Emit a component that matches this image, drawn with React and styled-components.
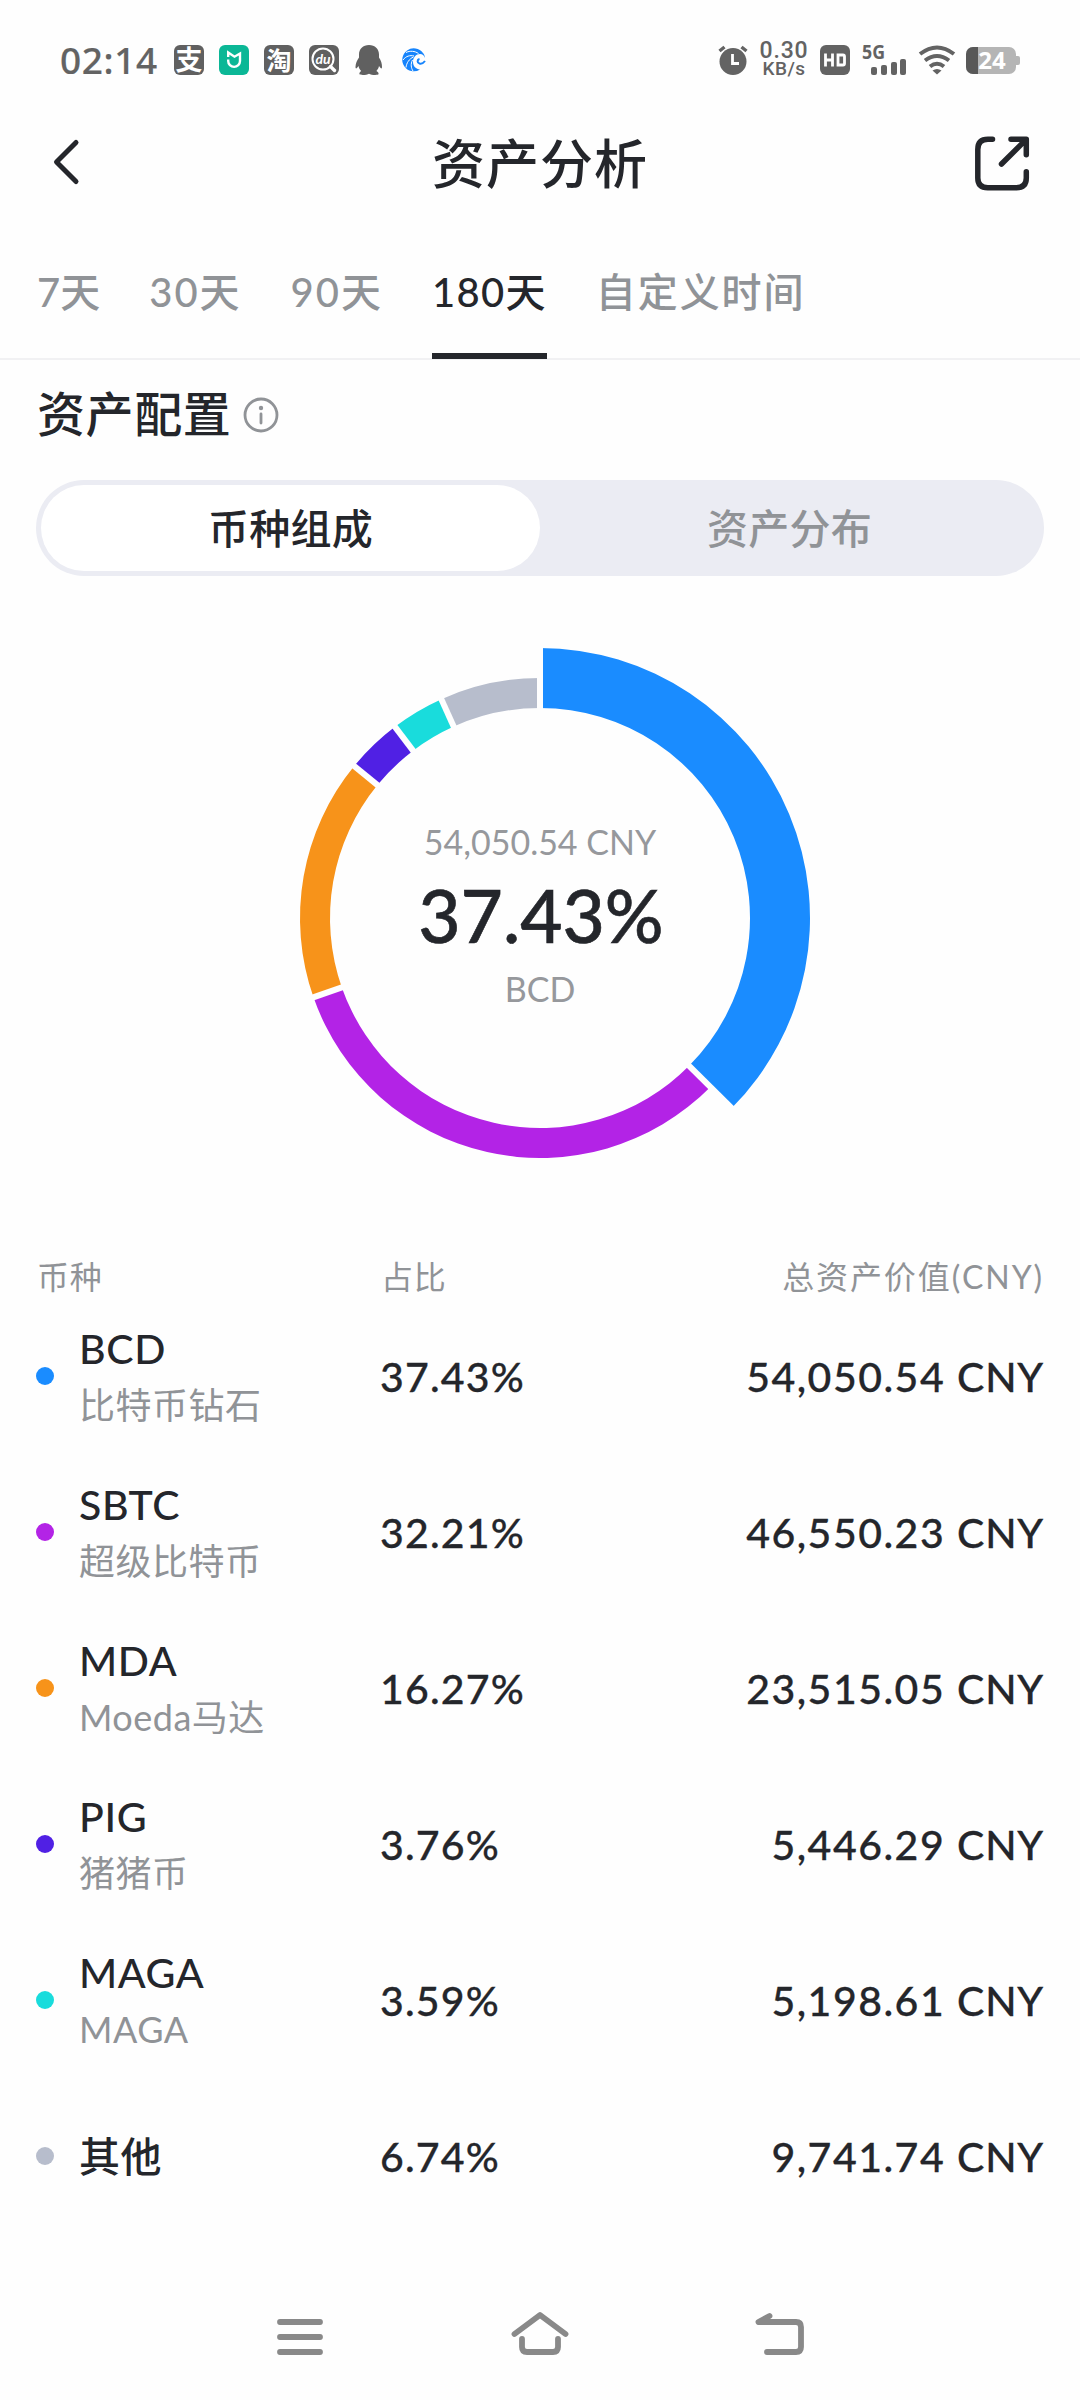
import React from "react";
import styled, { createGlobalStyle } from "styled-components";

const GlobalStyle = createGlobalStyle`
  * {
    box-sizing: border-box;
  }

  body {
    margin: 0;
    background: #fefefe;
    font-family: Lato, "Noto Sans CJK SC", sans-serif;
    color: #24262b;
  }
`;

const Screen = styled.div`
  display: flex;
  flex-direction: column;
  width: 1080px;
  height: 2400px;
  background: #fefefe;
  overflow: hidden;
`;

const StatusBar = styled.header`
  display: flex;
  justify-content: space-between;
  align-items: center;
  height: 120px;
  padding: 0 60px;
  color: #636363;
`;

const StatusGroup = styled.div`
  display: flex;
  align-items: center;
  gap: ${props => props.$gap || 0}px;

  svg {
    flex-shrink: 0;
    overflow: visible;
  }
`;

const Clock = styled.span`
  width: 100px;
  font-family: "Noto Sans", sans-serif;
  font-size: 37px;
  font-weight: 500;
  letter-spacing: 0.6px;
  line-height: 40px;
  -webkit-text-stroke: 0.2px;
`;

const AppIcons = styled.div`
  display: flex;
  align-items: center;
  gap: 15px;
`;

const AppTile = styled.div`
  display: flex;
  justify-content: center;
  align-items: center;
  width: 30px;
  height: 30px;
  border-radius: 6px;
  background: ${props => props.$color || "#606060"};
  color: #fff;
  font-size: ${props => props.$size || 27}px;
  font-weight: 700;
  line-height: 28px;
`;

const Speed = styled.div`
  display: flex;
  flex-direction: column;
  align-items: center;
  width: 48px;
  font-family: Roboto, sans-serif;
  font-size: 23px;
  font-weight: 500;
  letter-spacing: 0.8px;
  line-height: 18px;
`;

const SpeedUnit = styled.span`
  font-size: 19px;
  letter-spacing: 0.4px;
`;

const Header = styled.div`
  display: flex;
  justify-content: space-between;
  align-items: center;
  height: 88px;
  padding: 0 50px 0 48px;
`;

const Title = styled.h1`
  margin: 0;
  padding: 0 0 7px 2px;
  font-size: 53px;
  font-weight: 500;
  letter-spacing: 1px;
`;

const Tabs = styled.nav`
  display: flex;
  gap: 49px;
  height: 152px;
  padding: 48px 37px 0;
  border-bottom: 2px solid #f1f1f3;
`;

const Tab = styled.div`
  height: 103px;
  padding-top: 8px;
  font-size: 40px;
  font-weight: 500;
  letter-spacing: ${props => props.$spacing}px;
  line-height: 56px;
  white-space: nowrap;
  color: ${props => (props.$active ? "#24262b" : "#909397")};
  border-bottom: 6px solid ${props => (props.$active ? "#24262b" : "transparent")};
`;

const Section = styled.section`
  padding: 23px 36px 0;
`;

const SectionHead = styled.div`
  display: flex;
  align-items: center;
  gap: 12px;
  height: 64px;
  margin: 0 0 33px 1px;
`;

const SectionTitle = styled.h2`
  margin: 0;
  padding-bottom: 8px;
  font-size: 48px;
  font-weight: 500;
  letter-spacing: 0.6px;
`;

const Switch = styled.div`
  display: flex;
  height: 96px;
  padding: 5px;
  border-radius: 48px;
  background: #ebecf3;
`;

const SwitchItem = styled.div`
  display: flex;
  flex: 1;
  justify-content: center;
  align-items: center;
  padding-bottom: 4px;
  border-radius: 43px;
  background: ${props => (props.$active ? "#fff" : "transparent")};
  color: ${props => (props.$active ? "#24262b" : "#909397")};
  font-size: 41px;
  font-weight: 500;
  letter-spacing: 0.3px;
`;

const ChartArea = styled.div`
  display: grid;
  justify-items: center;
  align-items: center;
  height: 560px;
  margin-top: 62px;

  > * {
    grid-area: 1 / 1;
  }
`;

const ChartLabel = styled.div`
  display: flex;
  flex-direction: column;
  align-items: center;
  padding-bottom: 6px;
  color: #96989c;
  font-size: 34px;
  line-height: 46px;
`;

const ChartPercent = styled.div`
  padding-left: 2px;
  color: #24262b;
  font-size: 73px;
  font-weight: 500;
  line-height: 101px;
  -webkit-text-stroke: 0.6px;
`;

const Table = styled.div`
  padding: 0 36px;
  margin-top: 54px;
`;

const Row = styled.div`
  display: grid;
  grid-template-columns: 344px 250px 1fr;
  align-items: center;
  height: 156px;
`;

const HeadRow = styled(Row)`
  height: 46px;
  color: #909397;
  font-size: 32px;
`;

const HeadCell = styled.span`
  padding-left: ${props => (props.$right ? 0 : 1)}px;
  letter-spacing: ${props => (props.$right ? 1.9 : 0.8)}px;
  text-align: ${props => (props.$right ? "right" : "left")};
`;

const Coin = styled.div`
  display: flex;
  align-items: center;
`;

const Dot = styled.span`
  width: 18px;
  height: 18px;
  margin-right: 25px;
  border-radius: 50%;
  background: ${props => props.$color};
`;

const CoinText = styled.div`
  padding-top: 2px;
`;

const CoinName = styled.div`
  font-size: 41px;
  font-weight: 500;
  letter-spacing: 0.6px;
  line-height: 56px;
`;

const CoinAlias = styled.div`
  color: #909397;
  font-size: 36px;
  letter-spacing: 0.5px;
  line-height: 56px;
`;

const Amount = styled.div`
  font-size: 41px;
  font-weight: 500;
  letter-spacing: ${props => (props.$right ? 1.5 : 1.2)}px;
  text-align: ${props => (props.$right ? "right" : "left")};
  -webkit-text-stroke: 0.3px;
`;

const Currency = styled.span`
  letter-spacing: 0.8px;
`;

const NavBar = styled.footer`
  display: flex;
  justify-content: space-between;
  align-items: center;
  height: 128px;
  margin-top: auto;
  padding: 0 269px;
`;

const coins = [
  { name: "BCD", alias: "比特币钻石", percent: 37.43, value: "54,050.54", color: "#1a8cff" },
  { name: "SBTC", alias: "超级比特币", percent: 32.21, value: "46,550.23", color: "#b323e6" },
  { name: "MDA", alias: "Moeda马达", percent: 16.27, value: "23,515.05", color: "#f7931a" },
  { name: "PIG", alias: "猪猪币", percent: 3.76, value: "5,446.29", color: "#5020e4" },
  { name: "MAGA", alias: "MAGA", percent: 3.59, value: "5,198.61", color: "#19dcdc" },
  { name: "其他", alias: "", percent: 6.74, value: "9,741.74", color: "#b7bdcc" },
];

const ranges = [
  { label: "7天", spacing: 0 },
  { label: "30天", spacing: 2 },
  { label: "90天", spacing: 2 },
  { label: "180天", spacing: 1.3 },
  { label: "自定义时间", spacing: 1.9 },
];

const point = (radius, share) => {
  const angle = (share / 100) * Math.PI * 2;
  return `${280 + radius * Math.sin(angle)} ${280 - radius * Math.cos(angle)}`;
};

const ringPath = (start, end, inner, outer) => {
  const large = end - start > 50 ? 1 : 0;
  return `M${point(outer, start)} A${outer} ${outer} 0 ${large} 1 ${point(outer, end)}
    L${point(inner, end)} A${inner} ${inner} 0 ${large} 0 ${point(inner, start)} Z`;
};

const Donut = () => {
  let total = 0;
  const slices = coins.map((coin, index) => {
    const start = total;
    total += coin.percent;
    return { ...coin, start, end: total, outer: index === 0 ? 270 : 240 };
  });

  return (
    <svg width="560" height="560" viewBox="0 0 560 560">
      {slices.map(item => (
        <path key={item.name} d={ringPath(item.start, item.end, 210, item.outer)} fill={item.color} />
      ))}
      {slices.map(item => (
        <path key={item.name} d={`M${point(200, item.start)} L${point(276, item.start)}`} stroke="#fefefe" strokeWidth="6" />
      ))}
    </svg>
  );
};

const MiHomeIcon = () => (
  <svg width="30" height="30" viewBox="0 0 30 30" fill="none" stroke="#fff" strokeWidth="2.4">
    <path d="M9.200 14.500v1.500a5.900 5.900 0 0 0 11.800 0V8.500l-5.500 3.200L9.200 7.500v4.500" />
  </svg>
);

const BaiduIcon = () => (
  <svg width="30" height="30" viewBox="0 0 30 30" fill="none">
    <circle cx="14" cy="14" r="10.500" stroke="#fff" strokeWidth="2" />
    <path d="M21.500 21.500l4 4" stroke="#fff" strokeWidth="3.400" strokeLinecap="round" />
    <text x="14" y="18.500" fill="#fff" fontSize="14" fontStyle="italic" fontWeight="700" textAnchor="middle">du</text>
  </svg>
);

const PenguinIcon = () => (
  <svg width="30" height="30" viewBox="0 0 30 30" fill="#606060">
    <path d="M15 0C9 0 5 4 5 9.500v3c-2 3-3.500 6-3.500 9.500 0 2 1 2 3-1 .4 2 1.200 3.500 2.600 5C6 27 5 28 5.500 29.300c.5 1 7.500.9 9.500-.6 2 1.500 9 1.600 9.500.6.5-1.300-.5-2.300-2.100-3.300 1.400-1.500 2.200-3 2.600-5 2 3 3 3 3 1 0-3.500-1-6.500-3-9.500v-3C25 4 21 0 15 0z" />
  </svg>
);

const SwirlIcon = () => (
  <svg width="26" height="24" viewBox="-3 0 26 24" fill="none">
    <path d="M21 5A11.500 11.500 0 1 0 18 21.500C14 21 11 18.500 11 14s3-8 7-8c2.500 0 4 1.500 5 4-.2-2-.8-3.600-2-5z" fill="#1684fc" />
    <path d="M23 13c-1.500 2-3.500 3-5.500 2.500-2.500-.7-2.500-4 0-4.500" stroke="#1684fc" strokeWidth="2" />
    <path d="M4 4.500c4-2 9-1.500 12.500 1M1 12C4 8 8 7 12 8M4 19.500C4.500 15 7 11 11.500 9M11 23c-2-3-2.500-7-.5-11" stroke="#fff" strokeWidth="1" />
  </svg>
);

const AlarmIcon = () => (
  <svg width="30" height="30" viewBox="0 0 30 30">
    <circle cx="15" cy="16.500" r="13.500" fill="#636363" />
    <path d="M1.500 6l5-4M28.500 6l-5-4" stroke="#636363" strokeWidth="3.400" />
    <path d="M14.500 9v9.500h6.500" fill="none" stroke="#fff" strokeWidth="2.800" />
  </svg>
);

const HdIcon = () => (
  <svg width="30" height="30" viewBox="0 0 30 30">
    <rect width="30" height="30" rx="6" fill="#636363" />
    <path d="M5.500 8.500v13M12.500 8.500v13M5.500 15h7M18 10h5q1.500 0 1.500 1.500v7q0 1.500-1.500 1.500h-5z" fill="none" stroke="#fff" strokeWidth="2.800" />
  </svg>
);

const SignalIcon = () => (
  <svg width="46" height="30" viewBox="0 0 46 30" fill="#636363">
    <text x="0" y="13.500" fontFamily="Noto Sans" fontSize="19" fontWeight="700" textLength="23" lengthAdjust="spacingAndGlyphs">5G</text>
    <rect x="9" y="22" width="6" height="8" rx="2" />
    <rect x="19" y="20" width="6" height="10" rx="2" />
    <rect x="29" y="17" width="6" height="13" rx="2" />
    <rect x="38" y="14" width="6" height="16" rx="2" />
  </svg>
);

const WifiIcon = () => (
  <svg width="38" height="30" viewBox="0 0 38 30" fill="none" stroke="#636363" strokeWidth="4">
    <path d="M2 9q17-13 34 0M7 15.500q12-9 24 0M12 21.500q7-5.500 14 0" />
    <path d="M14.500 25.500q4.500-3 9 0L19 29.500z" fill="#636363" stroke="none" />
  </svg>
);

const BatteryIcon = () => (
  <svg width="54" height="27" viewBox="0 0 54 27">
    <rect width="50" height="27" rx="7" fill="#b5b5b5" />
    <path d="M7 0h5v27H7a7 7 0 0 1-7-7V7a7 7 0 0 1 7-7z" fill="#585858" />
    <path d="M50 9h2q2 0 2 2v5q0 2-2 2h-2z" fill="#b5b5b5" />
    <text x="26" y="22" fill="#fff" fontFamily="Noto Sans" fontSize="24" fontWeight="700" textAnchor="middle">24</text>
  </svg>
);

const BackIcon = () => (
  <svg width="56" height="56" viewBox="0 0 56 56" fill="none" stroke="#24262b" strokeWidth="5" strokeLinecap="round" strokeLinejoin="round">
    <path d="M28 6.500L8.500 26 28 45.500" />
  </svg>
);

const ShareIcon = () => (
  <svg width="56" height="56" viewBox="0 0 56 56" fill="none" stroke="#24262b" strokeWidth="5.500" strokeLinecap="round" strokeLinejoin="round">
    <path d="M18.500 3.300H14Q3.800 3.300 3.800 13.500V42q0 9.700 10 9.700h28.500q10 0 10-9.700v-6.300" />
    <path d="M37 3.300h15.300v15.400M52 3.600L27.500 28" />
  </svg>
);

const InfoIcon = () => (
  <svg width="36" height="36" viewBox="0 0 36 36" fill="none" stroke="#909397" strokeWidth="2.800">
    <circle cx="18" cy="18" r="16" />
    <path d="M18 17v9" strokeLinecap="round" />
    <circle cx="18" cy="11" r="2.200" fill="#909397" stroke="none" />
  </svg>
);

const NavIcon = ({ children }) => (
  <svg width="62" height="64" viewBox="0 0 62 64" fill="none" stroke="#898989" strokeWidth="5.800" strokeLinecap="round" strokeLinejoin="round">
    {children}
  </svg>
);

export default function App() {
  return (
    <Screen>
      <GlobalStyle />
      <StatusBar>
        <StatusGroup $gap={14}>
          <Clock>02:14</Clock>
          <AppIcons>
            <AppTile>支</AppTile>
            <AppTile $color="#0bb796"><MiHomeIcon /></AppTile>
            <AppTile $size={25}>淘</AppTile>
            <AppTile><BaiduIcon /></AppTile>
            <PenguinIcon />
            <SwirlIcon />
          </AppIcons>
        </StatusGroup>
        <StatusGroup $gap={12}>
          <AlarmIcon />
          <Speed>
            <span>0.30</span>
            <SpeedUnit>KB/s</SpeedUnit>
          </Speed>
          <HdIcon />
          <StatusGroup $gap={10}>
            <SignalIcon />
            <WifiIcon />
            <BatteryIcon />
          </StatusGroup>
        </StatusGroup>
      </StatusBar>

      <Header>
        <BackIcon />
        <Title>资产分析</Title>
        <ShareIcon />
      </Header>

      <Tabs>
        {ranges.map(range => (
          <Tab key={range.label} $spacing={range.spacing} $active={range.label === "180天"}>{range.label}</Tab>
        ))}
      </Tabs>

      <Section>
        <SectionHead>
          <SectionTitle>资产配置</SectionTitle>
          <InfoIcon />
        </SectionHead>
        <Switch>
          <SwitchItem $active>币种组成</SwitchItem>
          <SwitchItem>资产分布</SwitchItem>
        </Switch>
      </Section>

      <ChartArea>
        <Donut />
        <ChartLabel>
          <span>54,050.54 CNY</span>
          <ChartPercent>37.43%</ChartPercent>
          <span>BCD</span>
        </ChartLabel>
      </ChartArea>

      <Table>
        <HeadRow>
          <HeadCell>币种</HeadCell>
          <HeadCell>占比</HeadCell>
          <HeadCell $right>总资产价值(CNY)</HeadCell>
        </HeadRow>
        {coins.map(coin => (
          <Row key={coin.name}>
            <Coin>
              <Dot $color={coin.color} />
              <CoinText>
                <CoinName>{coin.name}</CoinName>
                {coin.alias && <CoinAlias>{coin.alias}</CoinAlias>}
              </CoinText>
            </Coin>
            <Amount>{coin.percent}%</Amount>
            <Amount $right>
              {coin.value} <Currency>CNY</Currency>
            </Amount>
          </Row>
        ))}
      </Table>

      <NavBar>
        <NavIcon><path d="M11 18h40M11 33h40M11 48h40" /></NavIcon>
        <NavIcon><path d="M5.500 30L31 11l25.500 19M13 35v8q0 5 5 5h26q5 0 5-5v-8" /></NavIcon>
        <NavIcon><path d="M20.500 12L9.500 18H47q5 0 5 5v20q0 5-5 5H18" /></NavIcon>
      </NavBar>
    </Screen>
  );
}
